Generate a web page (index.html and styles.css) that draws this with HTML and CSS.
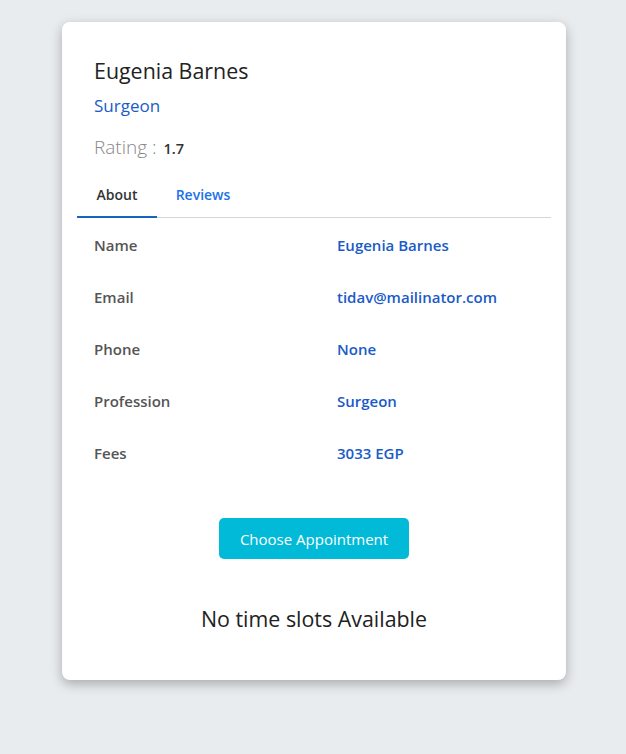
FILE: index.html
```html
<!DOCTYPE html>
<html>
<head>
<meta charset="utf-8">
<link rel="stylesheet" href="styles.css">
</head>
<body>
<div class="page">
  <div class="card">
    <div class="head">
      <h1 class="name">Eugenia Barnes</h1>
      <div class="prof">Surgeon</div>
      <div class="rating">Rating : <span class="rate-val">1.7</span></div>
    </div>
    <div class="tabs">
      <div class="tab active">About</div>
      <div class="tab">Reviews</div>
    </div>
    <div class="info">
      <div class="row"><div class="label">Name</div><div class="value">Eugenia Barnes</div></div>
      <div class="row"><div class="label">Email</div><div class="value">tidav@mailinator.com</div></div>
      <div class="row"><div class="label">Phone</div><div class="value">None</div></div>
      <div class="row"><div class="label">Profession</div><div class="value">Surgeon</div></div>
      <div class="row"><div class="label">Fees</div><div class="value">3033 EGP</div></div>
    </div>
    <div class="actions">
      <button class="btn">Choose Appointment</button>
    </div>
    <div class="empty">No time slots Available</div>
  </div>
</div>
</body>
</html>
```
FILE: styles.css
```css
html, body {
  margin: 0;
  padding: 0;
  background: #e9ecef;
}
.page {
  padding: 22px 60px 74px 62px;
}
.card {
  width: 504px;
  height: 658px;
  box-sizing: border-box;
  background: #fff;
  border-radius: 8px;
  box-shadow: 0 4px 12px rgba(0, 0, 0, 0.28);
  padding: 37px 15px 0 15px;
  font-family: "Open Sans", sans-serif;
}
.head {
  padding: 0 17px;
}
.name {
  margin: 0;
  font-weight: 400;
  font-size: 21.4px;
  line-height: 24px;
  color: #222;
}
.prof {
  margin-top: 12px;
  font-size: 17px;
  line-height: 22px;
  color: #1a5bc8;
}
.rating {
  margin-top: 17px;
  font-size: 19px;
  line-height: 26px;
  font-weight: 300;
  color: #888;
}
.rate-val {
  font-size: 14.5px;
  font-weight: 600;
  color: #333;
  margin-left: 2px;
}
.tabs {
  display: flex;
  margin-top: 14px;
  border-bottom: 1px solid #d6d6d6;
}
.tab {
  width: 80px;
  text-align: center;
  font-size: 14px;
  font-weight: 600;
  line-height: 38px;
  padding-bottom: 2px;
  color: #1a73e8;
  margin-bottom: -1px;
  border-bottom: 2px solid transparent;
}
.tab.active {
  color: #333;
  border-bottom-color: #1565c0;
}
.tab + .tab {
  width: 92px;
}
.info {
  padding: 1px 17px 0 17px;
}
.row {
  display: grid;
  grid-template-columns: 243px 1fr;
  height: 52px;
  align-items: center;
  font-family: "Open Sans", sans-serif;
  font-size: 15px;
  font-weight: 600;
}
.label {
  color: #555;
}
.value {
  color: #1a5bc8;
}
.actions {
  display: flex;
  justify-content: center;
  margin-top: 39px;
}
.btn {
  width: 190px;
  height: 41px;
  border: none;
  border-radius: 5px;
  background: #01bad8;
  color: #fff;
  font-family: "Open Sans", sans-serif;
  font-size: 15px;
}
.empty {
  margin-top: 46px;
  text-align: center;
  font-size: 21.4px;
  line-height: 28px;
  color: #222;
}
```
